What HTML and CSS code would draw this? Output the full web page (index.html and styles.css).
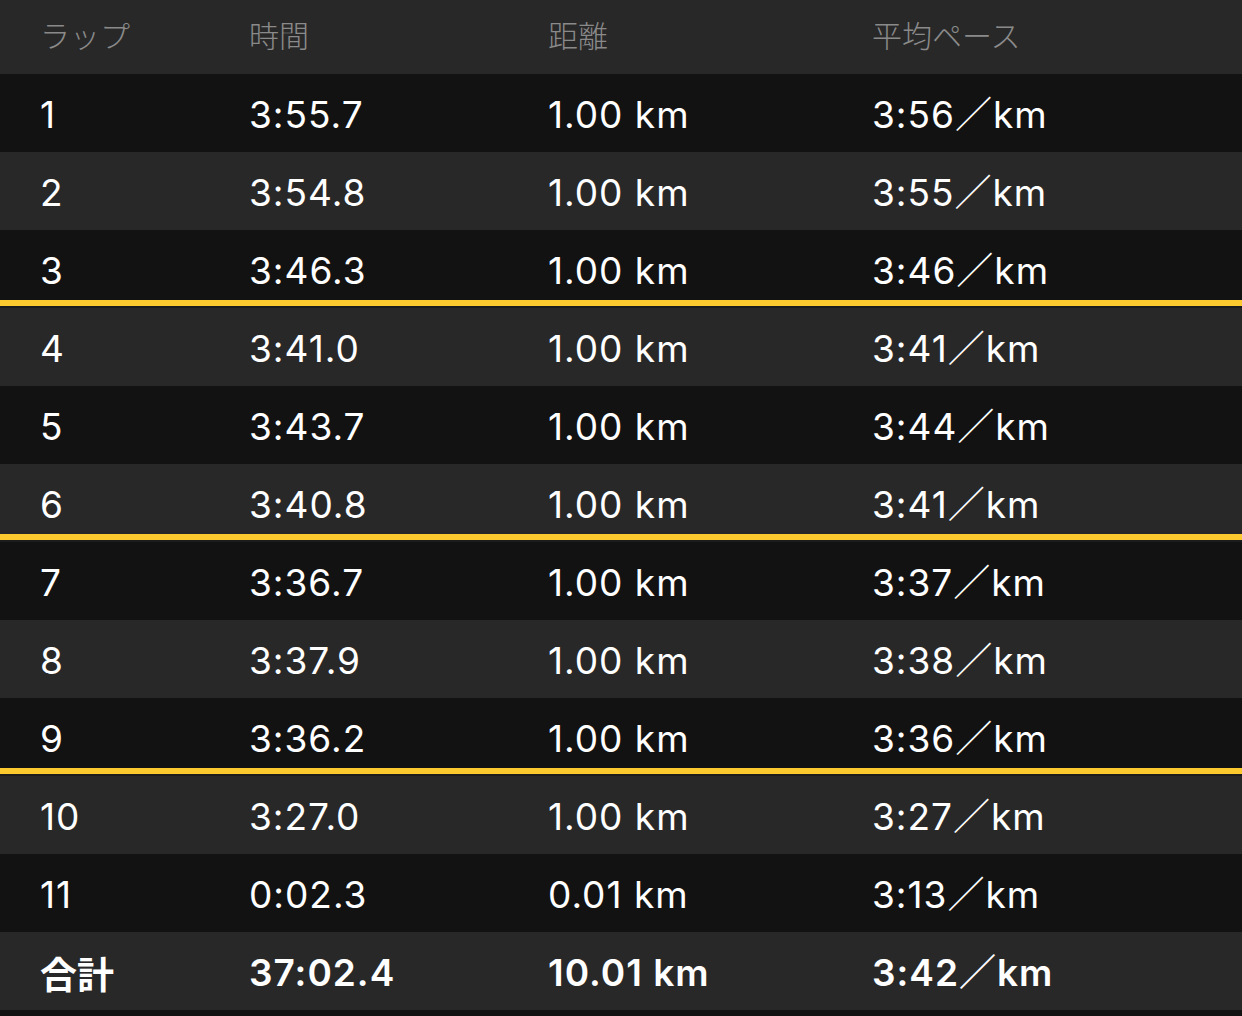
FILE: index.html
```html
<!DOCTYPE html>
<html lang="ja">
<head>
<meta charset="utf-8">
<link rel="stylesheet" href="styles.css">
</head>
<body>
<div class="table">
  <div class="row head">
    <div class="c c1">ラップ</div><div class="c c2">時間</div><div class="c c3">距離</div><div class="c c4">平均ペース</div>
  </div>
  <div class="row dark"><div class="c c1">1</div><div class="c c2">3:55.7</div><div class="c c3">1.00 km</div><div class="c c4">3:56／km</div></div>
  <div class="row gray"><div class="c c1">2</div><div class="c c2">3:54.8</div><div class="c c3">1.00 km</div><div class="c c4">3:55／km</div></div>
  <div class="row dark split"><div class="c c1">3</div><div class="c c2">3:46.3</div><div class="c c3">1.00 km</div><div class="c c4">3:46／km</div></div>
  <div class="row gray"><div class="c c1">4</div><div class="c c2">3:41.0</div><div class="c c3">1.00 km</div><div class="c c4">3:41／km</div></div>
  <div class="row dark"><div class="c c1">5</div><div class="c c2">3:43.7</div><div class="c c3">1.00 km</div><div class="c c4">3:44／km</div></div>
  <div class="row gray split"><div class="c c1">6</div><div class="c c2">3:40.8</div><div class="c c3">1.00 km</div><div class="c c4">3:41／km</div></div>
  <div class="row dark"><div class="c c1">7</div><div class="c c2">3:36.7</div><div class="c c3">1.00 km</div><div class="c c4">3:37／km</div></div>
  <div class="row gray"><div class="c c1">8</div><div class="c c2">3:37.9</div><div class="c c3">1.00 km</div><div class="c c4">3:38／km</div></div>
  <div class="row dark split"><div class="c c1">9</div><div class="c c2">3:36.2</div><div class="c c3">1.00 km</div><div class="c c4">3:36／km</div></div>
  <div class="row gray"><div class="c c1">10</div><div class="c c2">3:27.0</div><div class="c c3">1.00 km</div><div class="c c4">3:27／km</div></div>
  <div class="row dark"><div class="c c1">11</div><div class="c c2">0:02.3</div><div class="c c3">0.01 km</div><div class="c c4">3:13／km</div></div>
  <div class="row gray total"><div class="c c1">合計</div><div class="c c2">37:02.4</div><div class="c c3">10.01 km</div><div class="c c4">3:42／km</div></div>
</div>
</body>
</html>
```

FILE: styles.css
```css
html, body {
  margin: 0;
  padding: 0;
  background: #121212;
}
body {
  font-family: Inter, "Noto Sans CJK JP", sans-serif;
  color: #ffffff;
  width: 1242px;
  height: 1016px;
  overflow: hidden;
}
.table {
  display: flex;
  flex-direction: column;
}
.row {
  position: relative;
  display: grid;
  grid-template-columns: 209px 299px 324px 1fr;
  align-items: center;
  height: 78px;
  padding-left: 40px;
  font-size: 37px;
  font-weight: 400;
  letter-spacing: 1px;
}
.row.head {
  height: 74px;
  background: #282828;
  color: #8a8a8a;
  font-size: 30px;
  letter-spacing: 0;
  padding-bottom: 9px;
  box-sizing: border-box;
}
.row.head .c {
  font-family: "Noto Sans CJK JP", sans-serif;
  font-weight: 300;
}
.row.dark { background: #121212; }
.row.gray { background: #282828; }
.row.split::after {
  content: "";
  position: absolute;
  left: 0;
  right: 0;
  bottom: 0;
  height: 8px;
  background: #fcca2e;
  border-bottom: 2px solid #1c1c1c;
  box-sizing: border-box;
}
.row.total {
  font-weight: 600;
}
.row.total .c1 {
  font-family: "Noto Sans CJK JP", sans-serif;
  font-weight: 700;
  letter-spacing: 0;
}
.c {
  white-space: nowrap;
  line-height: 44px;
  height: 44px;
  padding-top: 3px;
}
```
